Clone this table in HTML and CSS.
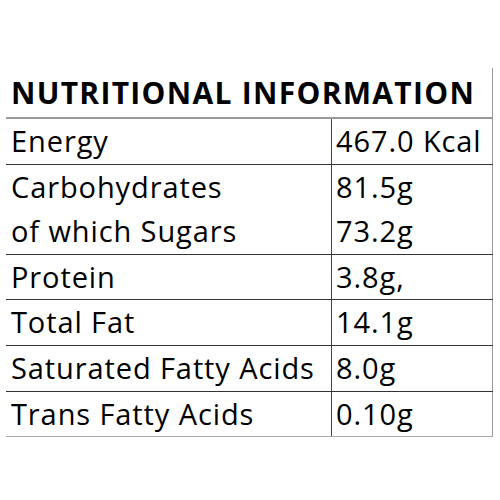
FILE: index.html
```html
<!DOCTYPE html>
<html lang="en">
<head>
  <meta charset="UTF-8">
  <meta name="viewport" content="width=device-width, initial-scale=1.0">
  <title>Nutritional Information</title>
  <link rel="stylesheet" href="styles.css">
</head>
<body>
  <table class="nutrition">
    <tr class="head">
      <th colspan="2">NUTRITIONAL INFORMATION</th>
    </tr>
    <tr>
      <td class="name">Energy</td>
      <td class="value">467.0 Kcal</td>
    </tr>
    <tr>
      <td class="name">Carbohydrates<br>of which Sugars</td>
      <td class="value">81.5g<br>73.2g</td>
    </tr>
    <tr>
      <td class="name">Protein</td>
      <td class="value">3.8g,</td>
    </tr>
    <tr>
      <td class="name">Total Fat</td>
      <td class="value">14.1g</td>
    </tr>
    <tr>
      <td class="name">Saturated Fatty Acids</td>
      <td class="value">8.0g</td>
    </tr>
    <tr class="last">
      <td class="name">Trans Fatty Acids</td>
      <td class="value">0.10g</td>
    </tr>
  </table>
</body>
</html>
```

FILE: styles.css
```css
body {
  margin: 0;
  background-color: #fff;
}

.nutrition {
  margin: 68px 0 0 6px;
  width: 487px;
  border-collapse: collapse;
  font-family: "Open Sans", sans-serif;
  color: #000;
}

.nutrition th {
  height: 49px;
  padding: 0 0 0 5px;
  text-align: left;
  font-size: 30px;
  font-weight: bold;
  letter-spacing: 1.3px;
  line-height: 49px;
  border-right: 1px solid #999;
  border-bottom: 2px solid #999;
}

.nutrition td {
  padding: 0 0 0 5px;
  font-size: 29px;
  letter-spacing: 0.9px;
  line-height: 44.6px;
  vertical-align: top;
  white-space: nowrap;
  border-bottom: 1px solid #333;
}

.nutrition .name {
  width: 320px;
}

.nutrition .value {
  padding-left: 4px;
  border-left: 1px solid #444;
  border-right: 1px solid #999;
}

.nutrition .last td {
  border-bottom-color: #aaa;
}
```
